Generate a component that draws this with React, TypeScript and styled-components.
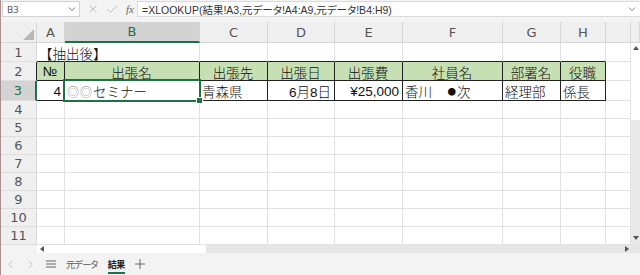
import React from 'react'
import styled, { createGlobalStyle } from 'styled-components'

const GlobalStyle = createGlobalStyle`
  html, body {
    margin: 0;
    padding: 0;
    background: #f3f3f3;
  }
  body {
    font-family: 'Liberation Sans', 'Noto Sans CJK JP', sans-serif;
  }
`

const GREEN = '#1e7145'

const Window = styled.div`
  width: 640px;
  height: 275px;
  box-sizing: border-box;
  border-left: 1px solid #a88f8f;
  display: flex;
  flex-direction: column;
  overflow: hidden;
  background: #f3f3f3;
`

// ---------- formula bar ----------
const FormulaBar = styled.div`
  height: 22px;
  box-sizing: border-box;
  display: flex;
  padding: 1px 0 5px 1px;
  background: #f3f3f3;
`
const NameBox = styled.div`
  width: 78px;
  box-sizing: border-box;
  border: 1px solid #d2d2d2;
  background: #fff;
  display: flex;
  align-items: center;
  justify-content: space-between;
  padding: 0 3px 0 4px;
  font-family: 'Noto Sans', sans-serif;
  font-size: 9.5px;
  color: #555;
`
const IconStrip = styled.div`
  width: 57px;
  display: flex;
  align-items: center;
  gap: 8px;
  padding-left: 8px;
  box-sizing: border-box;
`
const Fx = styled.span`
  font-family: 'Liberation Serif', serif;
  font-style: italic;
  font-size: 11px;
  color: #666;
`
const FormulaInput = styled.div`
  flex: 1;
  background: #fff;
  border: 1px solid #dadada;
  border-right: none;
  display: flex;
  align-items: center;
  justify-content: space-between;
  padding: 0 4px 0 4px;
  font-family: 'Liberation Sans', 'Noto Sans CJK JP', sans-serif;
  font-feature-settings: 'palt';
  font-size: 10.5px;
  color: #333;
  white-space: nowrap;
`

// ---------- sheet grid ----------
const Sheet = styled.div`
  display: grid;
  grid-template-columns: 36px 28px 135px 68px 67px 68px 100px 58px 45px 25px 9px;
  grid-template-rows: 21px 19px 19px 20px repeat(8, 18px);
  background: #fff;
`
const Corner = styled.div`
  background: #efefef;
  border-right: 1px solid #d6d6d6;
  border-bottom: 1px solid #d6d6d6;
  display: flex;
  align-items: flex-end;
  justify-content: flex-end;
  padding: 0 2px 2px 0;
  box-sizing: border-box;
`
const ColHead = styled.div<{ $sel?: boolean }>`
  box-sizing: border-box;
  background: ${(p) => (p.$sel ? '#d3d3d3' : '#efefef')};
  border-right: 1px solid #d6d6d6;
  border-bottom: ${(p) => (p.$sel ? `2px solid ${GREEN}` : '1px solid #d6d6d6')};
  color: ${(p) => (p.$sel ? GREEN : '#555')};
  font-family: 'DejaVu Sans', sans-serif;
  font-size: 13px;
  display: flex;
  align-items: center;
  justify-content: center;
`
const RowHead = styled.div<{ $sel?: boolean; $edge?: boolean }>`
  box-sizing: border-box;
  background: ${(p) => (p.$sel ? '#d3d3d3' : '#efefef')};
  border-bottom: 1px solid #dedede;
  border-right: ${(p) =>
    p.$sel ? `2px solid ${GREEN}` : p.$edge ? '1px solid #222' : '1px solid #d6d6d6'};
  color: ${(p) => (p.$sel ? GREEN : '#555')};
  font-family: 'DejaVu Sans', sans-serif;
  font-size: 13px;
  display: flex;
  align-items: center;
  justify-content: center;
`
const Cell = styled.div<{
  $align?: 'left' | 'right' | 'center'
  $fill?: boolean
  $dark?: boolean
  $darkBottom?: boolean
  $open?: boolean
  $sel?: boolean
}>`
  position: relative;
  box-sizing: border-box;
  background: ${(p) => (p.$fill ? '#c6e0b4' : 'transparent')};
  border-right: 1px solid ${(p) => (p.$dark ? '#222' : p.$open ? 'transparent' : '#e1e1e1')};
  border-bottom: 1px solid ${(p) => (p.$dark || p.$darkBottom ? '#222' : '#e1e1e1')};
  display: flex;
  align-items: center;
  justify-content: ${(p) =>
    p.$align === 'right' ? 'flex-end' : p.$align === 'center' ? 'center' : 'flex-start'};
  padding: 1px 3px 0 2px;
  font-size: 13.5px;
  font-weight: 300;
  color: #111;
  white-space: nowrap;
  overflow: visible;
  ${(p) =>
    p.$sel &&
    `
    &::after {
      content: '';
      position: absolute;
      left: -2px;
      top: -2px;
      right: -2px;
      bottom: -2px;
      border: 2px solid ${GREEN};
      z-index: 2;
      pointer-events: none;
    }
    &::before {
      content: '';
      position: absolute;
      right: -4px;
      bottom: -4px;
      width: 5px;
      height: 5px;
      background: ${GREEN};
      border: 1px solid #fff;
      z-index: 3;
    }
  `}
`
const Mark = styled.span`
  color: #8a8a8a;
  font-size: 12px;
  margin-right: 1px;
`
const Dot = styled.span`
  font-family: 'Noto Sans CJK JP', sans-serif;
  font-size: 8.5px;
  margin: 0 1px 0 2px;
`

// ---------- scrollbars ----------
const VScroll = styled.div`
  grid-column: 11;
  grid-row: 2 / span 11;
  background: #e8e8e8;
  display: flex;
  flex-direction: column;
`
const VThumb = styled.div`
  height: 77px;
  background: #fff;
  display: flex;
  justify-content: center;
  padding-top: 3px;
  box-sizing: border-box;
`
const VTrack = styled.div`
  flex: 1;
  display: flex;
  align-items: flex-end;
  justify-content: center;
  padding-bottom: 5px;
`
const HScroll = styled.div`
  height: 8px;
  display: flex;
  padding-left: 36px;
  background: #f3f3f3;
`
const HThumb = styled.div`
  width: 169px;
  background: #fff;
  display: flex;
  align-items: center;
  padding-left: 3px;
  box-sizing: border-box;
`
const HTrack = styled.div`
  flex: 1;
  background: #e6e6e6;
  display: flex;
  align-items: center;
  justify-content: flex-end;
  padding-right: 11px;
`

// ---------- sheet tabs ----------
const TabBar = styled.div`
  flex: 1;
  display: flex;
  align-items: center;
  background: #f3f3f3;
  font-family: 'Noto Sans CJK JP', sans-serif;
  font-feature-settings: 'palt';
  font-size: 9px;
  letter-spacing: -0.6px;
  color: #444;
`
const NavBtn = styled.div`
  width: 20px;
  display: flex;
  justify-content: center;
`
const Tab = styled.div<{ $active?: boolean }>`
  position: relative;
  height: 100%;
  display: flex;
  align-items: center;
  padding: 0 5px;
  font-weight: ${(p) => (p.$active ? 700 : 400)};
  color: ${(p) => (p.$active ? '#222' : '#555')};
  ${(p) =>
    p.$active &&
    `
    &::after {
      content: '';
      position: absolute;
      left: 5px;
      right: 5px;
      bottom: 1px;
      height: 2px;
      background: ${GREEN};
    }
  `}
`

const Chevron = ({ dir, color }: { dir: 'left' | 'right' | 'down'; color: string }) => {
  const d = dir === 'left' ? 'M5 1 L2 4.5 L5 8' : dir === 'right' ? 'M2 1 L5 4.5 L2 8' : 'M1 2.5 L4 5.5 L7 2.5'
  return (
    <svg width="8" height="9" viewBox="0 0 8 9">
      <path d={d} fill="none" stroke={color} strokeWidth="1" />
    </svg>
  )
}

const Tri = ({ dir }: { dir: 'up' | 'down' | 'left' | 'right' }) => {
  const pts = {
    up: '0,4 3,0 6,4',
    down: '0,0 6,0 3,4',
    left: '4,0 4,6 0,3',
    right: '0,0 0,6 4,3',
  }[dir]
  const w = dir === 'up' || dir === 'down' ? 6 : 4
  const h = dir === 'up' || dir === 'down' ? 4 : 6
  return (
    <svg width={w} height={h} viewBox={`0 0 ${w} ${h}`}>
      <polygon points={pts} fill="#555" />
    </svg>
  )
}

type CellDef = { t: React.ReactNode; a?: 'left' | 'right' | 'center' }

const headers = ['№', '出張名', '出張先', '出張日', '出張費', '社員名', '部署名', '役職']
const record: CellDef[] = [
  { t: '4', a: 'right' },
  {
    t: (
      <>
        <Mark>◎</Mark>
        <Mark>◎</Mark>セミナー
      </>
    ),
  },
  { t: '青森県' },
  { t: '6月8日', a: 'right' },
  { t: '¥25,000', a: 'right' },
  {
    t: (
      <>
        香川　<Dot>●</Dot>次
      </>
    ),
  },
  { t: '経理部' },
  { t: '係長' },
]
const colLetters = ['A', 'B', 'C', 'D', 'E', 'F', 'G', 'H', '', '']

export default function App() {
  const rows = Array.from({ length: 11 }, (_, i) => i + 1)
  return (
    <Window>
      <GlobalStyle />
      <FormulaBar>
        <NameBox>
          B3
          <Chevron dir="down" color="#777" />
        </NameBox>
        <IconStrip>
          <svg width="10" height="10" viewBox="0 0 10 10">
            <path d="M1.5 1.5 L8.5 8.5 M8.5 1.5 L1.5 8.5" stroke="#bdbdbd" strokeWidth="1" />
          </svg>
          <svg width="12" height="10" viewBox="0 0 12 10">
            <path d="M1 5 L4.5 8.5 L11 1.5" fill="none" stroke="#bdbdbd" strokeWidth="1" />
          </svg>
          <Fx>fx</Fx>
        </IconStrip>
        <FormulaInput>
          =XLOOKUP(結果!A3,元データ!A4:A9,元データ!B4:H9)
          <Chevron dir="down" color="#888" />
        </FormulaInput>
      </FormulaBar>

      <Sheet>
        <Corner>
          <svg width="11" height="11" viewBox="0 0 11 11">
            <polygon points="11,0 11,11 0,11" fill="#b8b8b8" />
          </svg>
        </Corner>
        {colLetters.map((c, i) => (
          <ColHead key={`h${i}`} $sel={c === 'B'}>
            {c}
          </ColHead>
        ))}

        {rows.map((r) => (
          <React.Fragment key={r}>
            <RowHead $sel={r === 3} $edge={r === 2}>
              {r}
            </RowHead>
            {Array.from({ length: 9 }, (_, c) => {
              const inTable = c < 8
              if (r === 1) {
                return (
                  <Cell key={c} $darkBottom={inTable} $open={c === 0}>
                    {c === 0 ? '【抽出後】' : ''}
                  </Cell>
                )
              }
              if (r === 2 && inTable) {
                return (
                  <Cell key={c} $dark $fill $align="center">
                    {headers[c]}
                  </Cell>
                )
              }
              if (r === 3 && inTable) {
                return (
                  <Cell key={c} $dark $align={record[c].a} $sel={c === 1}>
                    {record[c].t}
                  </Cell>
                )
              }
              return <Cell key={c} />
            })}
          </React.Fragment>
        ))}

        <VScroll>
          <VThumb>
            <Tri dir="up" />
          </VThumb>
          <VTrack>
            <Tri dir="down" />
          </VTrack>
        </VScroll>
      </Sheet>

      <HScroll>
        <HThumb>
          <Tri dir="left" />
        </HThumb>
        <HTrack>
          <Tri dir="right" />
        </HTrack>
      </HScroll>

      <TabBar>
        <NavBtn>
          <Chevron dir="left" color="#c4c4c4" />
        </NavBtn>
        <NavBtn>
          <Chevron dir="right" color="#c4c4c4" />
        </NavBtn>
        <NavBtn>
          <svg width="10" height="8" viewBox="0 0 10 8">
            <path d="M0 1 H10 M0 4 H10 M0 7 H10" stroke="#666" strokeWidth="1" />
          </svg>
        </NavBtn>
        <Tab>元データ</Tab>
        <Tab $active>結果</Tab>
        <NavBtn>
          <svg width="10" height="10" viewBox="0 0 10 10">
            <path d="M5 0 V10 M0 5 H10" stroke="#666" strokeWidth="1" />
          </svg>
        </NavBtn>
      </TabBar>
    </Window>
  )
}
